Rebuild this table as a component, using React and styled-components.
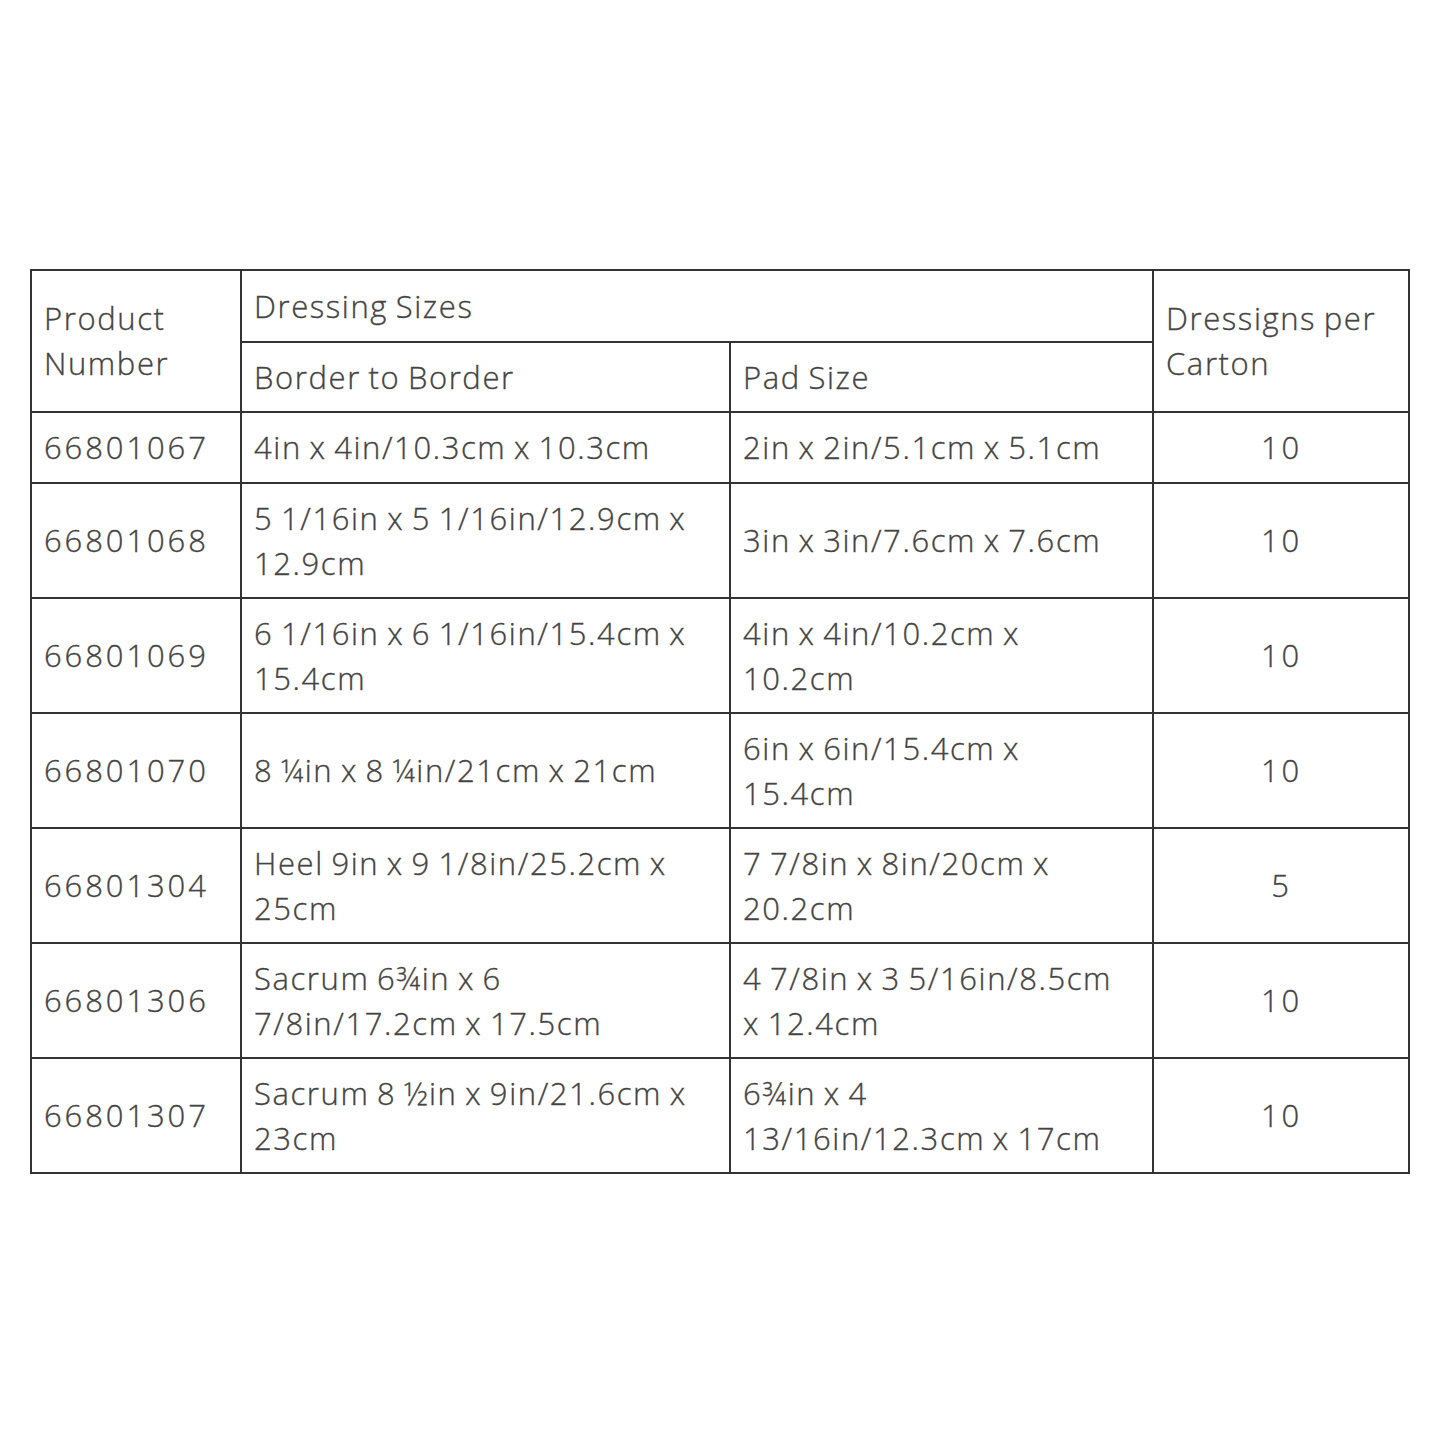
import { createGlobalStyle, styled } from 'styled-components';

const Global = createGlobalStyle`
  html, body {
    margin: 0;
    background: #fff;
  }
`;

const Page = styled.div`
  width: 1445px;
  height: 1445px;
  padding: 269px 0 0 30px;
  box-sizing: border-box;
`;

const Table = styled.table`
  border-collapse: collapse;
  table-layout: fixed;
  width: 1378px;
  font-family: 'Open Sans', 'Liberation Sans', sans-serif;
  font-weight: 300;
  font-size: 31px;
  line-height: 45px;
  color: #444;
  -webkit-text-stroke: 0.35px #444;
`;

const Cell = styled.td`
  border: 2px solid #333;
  padding: 0 11px 0 12px;
  vertical-align: middle;
  white-space: nowrap;
  text-align: ${(p) => (p.$center ? 'center' : 'left')};
  letter-spacing: ${(p) => (p.$digits ? 2.9 : 1.6)}px;
  word-spacing: ${(p) => (p.$digits ? 0 : -2)}px;
`;

const Row = styled.tr`
  height: ${(p) => p.$h}px;
`;

const rows = [
  ['66801067', ['4in x 4in/10.3cm x 10.3cm'], ['2in x 2in/5.1cm x 5.1cm'], '10', 71],
  ['66801068', ['5 1/16in x 5 1/16in/12.9cm x', '12.9cm'], ['3in x 3in/7.6cm x 7.6cm'], '10', 115],
  ['66801069', ['6 1/16in x 6 1/16in/15.4cm x', '15.4cm'], ['4in x 4in/10.2cm x', '10.2cm'], '10', 115],
  ['66801070', ['8 ¼in x 8 ¼in/21cm x 21cm'], ['6in x 6in/15.4cm x', '15.4cm'], '10', 115],
  ['66801304', ['Heel 9in x 9 1/8in/25.2cm x', '25cm'], ['7 7/8in x 8in/20cm x', '20.2cm'], '5', 115],
  ['66801306', ['Sacrum 6¾in x 6', '7/8in/17.2cm x 17.5cm'], ['4 7/8in x 3 5/16in/8.5cm', 'x 12.4cm'], '10', 115],
  ['66801307', ['Sacrum 8 ½in x 9in/21.6cm x', '23cm'], ['6¾in x 4', '13/16in/12.3cm x 17cm'], '10', 115],
];

function Lines({ lines }) {
  return lines.map((l, i) => (
    <span key={i}>
      {i > 0 && <br />}
      {l}
    </span>
  ));
}

export default function App() {
  return (
    <Page>
      <Global />
      <Table>
        <colgroup>
          <col style={{ width: 210 }} />
          <col style={{ width: 489 }} />
          <col style={{ width: 423 }} />
          <col style={{ width: 256 }} />
        </colgroup>
        <tbody>
          <Row $h={72}>
            <Cell rowSpan={2}>
              Product
              <br />
              Number
            </Cell>
            <Cell colSpan={2}>Dressing Sizes</Cell>
            <Cell rowSpan={2}>
              Dressigns per
              <br />
              Carton
            </Cell>
          </Row>
          <Row $h={70}>
            <Cell>Border to Border</Cell>
            <Cell>Pad Size</Cell>
          </Row>
          {rows.map(([num, border, pad, qty, h]) => (
            <Row key={num} $h={h}>
              <Cell $digits>{num}</Cell>
              <Cell>
                <Lines lines={border} />
              </Cell>
              <Cell>
                <Lines lines={pad} />
              </Cell>
              <Cell $center $digits>
                {qty}
              </Cell>
            </Row>
          ))}
        </tbody>
      </Table>
    </Page>
  );
}
